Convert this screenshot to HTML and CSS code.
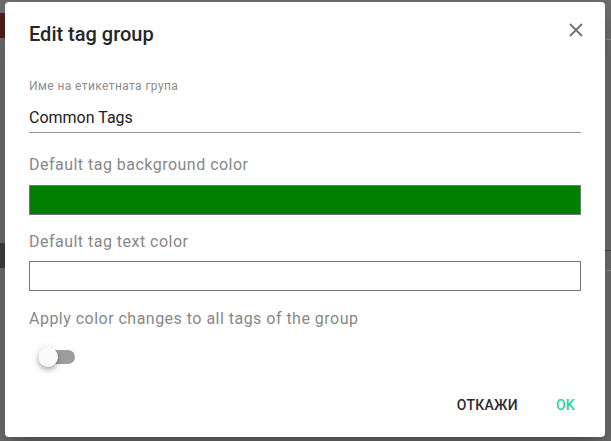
FILE: index.html
```html
<!DOCTYPE html>
<html lang="en">
<head>
<meta charset="utf-8">
<title>Edit tag group</title>
<link rel="stylesheet" href="styles.css">
</head>
<body>
<div class="backdrop">
  <div class="bg-strip bg-red"></div>
  <div class="bg-strip bg-dark"></div>
  <div class="bg-line bg-line-r1"></div>
  <div class="bg-line bg-line-r2"></div>
  <div class="bg-line bg-line-r3"></div>
</div>
<div class="dialog">
  <div class="header">
    <h1 class="title">Edit tag group</h1>
    <button class="close" aria-label="Close">
      <svg width="14" height="14" viewBox="0 0 14 14"><path d="M1 1 L13 13 M13 1 L1 13" stroke="#757575" stroke-width="2" fill="none"/></svg>
    </button>
  </div>
  <div class="body">
    <div class="small-label">Име на етикетната група</div>
    <div class="text-input">Common Tags</div>
    <div class="label label-bg">Default tag background color</div>
    <div class="color-box color-green"></div>
    <div class="label label-text">Default tag text color</div>
    <div class="color-box color-white"></div>
    <div class="label label-apply">Apply color changes to all tags of the group</div>
    <div class="switch">
      <div class="track"></div>
      <div class="thumb"></div>
    </div>
  </div>
  <div class="actions">
    <button class="btn btn-cancel">Откажи</button>
    <button class="btn btn-ok">OK</button>
  </div>
</div>
</body>
</html>
```
FILE: styles.css
```css
* { box-sizing: border-box; }
html, body { margin: 0; height: 100%; }
body {
  background: #6b6b6b;
  font-family: Roboto, "Noto Sans", "Liberation Sans", sans-serif;
  padding: 2px 6px 4px 5px;
  overflow: hidden;
  position: relative;
}
.backdrop { position: absolute; inset: 0; }
.bg-strip { position: absolute; left: 0; width: 8px; }
.bg-red { top: 13px; height: 25px; background: #4a1f1f; }
.bg-dark { top: 243px; height: 25px; background: #3d3d3d; }
.bg-line { position: absolute; right: 0; width: 10px; height: 1px; background: #8a8a8a; }
.bg-line-r1 { top: 39px; }
.bg-line-r2 { top: 250px; background: #444; }
.bg-line-r3 { top: 270px; }

.dialog {
  position: relative;
  width: 600px;
  height: 435px;
  background: #fff;
  border-radius: 4px;
  box-shadow: 0 11px 15px -7px rgba(0,0,0,.2), 0 24px 38px 3px rgba(0,0,0,.14);
  display: flex;
  flex-direction: column;
  padding: 16px 0 0 0;
}
.header {
  display: flex;
  align-items: center;
  justify-content: space-between;
  padding: 0 22px 0 24px;
  height: 32px;
}
.title {
  margin: 0;
  font-size: 20px;
  font-weight: 500;
  line-height: 32px;
  color: #262626;
}
.close {
  border: 0;
  background: none;
  padding: 0;
  width: 14px;
  height: 14px;
  display: flex;
  margin-top: -8px;
}
.body {
  padding: 28px 24px 0 24px;
  flex: 1;
}
.small-label {
  font-size: 12px;
  line-height: 16px;
  color: #8c8c8c;
  letter-spacing: 0.0333em;
}
.text-input {
  padding-top: 12px;
  padding-bottom: 2px;
  font-size: 16px;
  line-height: 24px;
  color: #212121;
  border-bottom: 1px solid #949494;
  width: 552px;
}
.label {
  font-size: 16px;
  line-height: 24px;
  color: #888;
  letter-spacing: 0.03em;
}
.label-bg { margin-top: 20px; }
.label-text { margin-top: 15px; }
.label-apply { margin-top: 16px; }
.color-box {
  width: 552px;
  height: 30px;
  border: 1px solid #767676;
  margin-top: 8px;
}
.color-green { background: #008000; }
.color-white { background: #fff; margin-top: 7px; }
.switch {
  position: relative;
  margin: 16px 0 0 9px;
  width: 38px;
  height: 20px;
}
.track {
  position: absolute;
  left: 0;
  top: 3px;
  width: 37px;
  height: 14px;
  border-radius: 7px;
  background: #9e9e9e;
}
.thumb {
  position: absolute;
  left: 0;
  top: 0;
  width: 20px;
  height: 20px;
  border-radius: 50%;
  background: #fafafa;
  box-shadow: 0 2px 4px -1px rgba(0,0,0,.2), 0 4px 5px 0 rgba(0,0,0,.14), 0 1px 10px 0 rgba(0,0,0,.12);
}
.actions {
  display: flex;
  justify-content: flex-end;
  padding: 0 14px 14px 0;
  gap: 6px;
}
.btn {
  border: 0;
  background: none;
  font-family: inherit;
  font-size: 14px;
  font-weight: 500;
  text-transform: uppercase;
  letter-spacing: 0.02em;
  height: 36px;
  padding: 0 16px;
}
.btn-cancel { color: #2a2a2a; }
.btn-ok { color: #2bd3a2; }
```
